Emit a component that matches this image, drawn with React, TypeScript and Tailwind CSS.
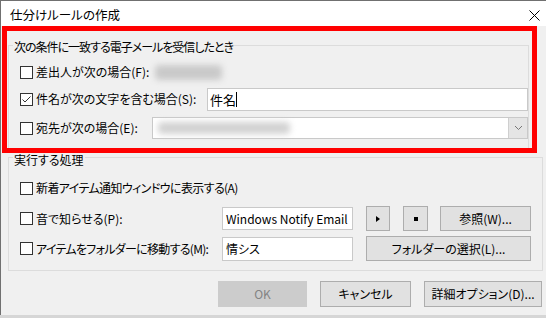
import React from "react";

function Check({ checked }: { checked?: boolean }) {
  return (
    <span className="w-[13px] h-[13px] border border-[#333333] bg-white flex items-center justify-center shrink-0">
      {checked && (
        <svg width="11" height="11" viewBox="0 0 11 11">
          <path d="M1.5 5.5 L4 8 L9.5 2.5" stroke="#333333" fill="none" strokeWidth="1" />
        </svg>
      )}
    </span>
  );
}

function Btn({ children, w, disabled }: { children: React.ReactNode; w: string; disabled?: boolean }) {
  return (
    <div
      className={
        "h-full flex items-center justify-center shrink-0 text-[12px] whitespace-nowrap " +
        w +
        (disabled
          ? " bg-[#cccccc] border border-[#cccccc] text-[#838383]"
          : " bg-[#e1e1e1] border border-[#adadad] text-black")
      }
    >
      {children}
    </div>
  );
}

export default function App() {
  return (
    <div className="w-[546px] h-[318px] overflow-hidden bg-white font-['Noto_Sans_CJK_JP','Noto_Sans',sans-serif] [font-feature-settings:'palt'] text-black">
      <div className="w-[546px] h-[315px] border-l border-t border-[#707070] bg-[#f0f0f0] flex flex-col">
        {/* Title bar */}
        <div className="h-[25px] bg-white flex items-center justify-between pl-[9px] pr-[6px] shrink-0">
          <span className="text-[12.5px] leading-[14px] mt-[3px]">仕分けルールの作成</span>
          <svg width="11" height="11" viewBox="0 0 11 11" className="mt-[3px]">
            <path d="M0.5 0.5 L10.5 10.5 M10.5 0.5 L0.5 10.5" stroke="#000" strokeWidth="1" />
          </svg>
        </div>

        {/* Red highlight */}
        <div className="ml-[1px] w-[535px] h-[127px] border-[5px] border-[#ff0000] shrink-0">
          <div className="ml-[1px] mt-[14px] w-[521px] h-[103px] border border-b-0 border-[#dcdcdc] flex flex-col">
            <span className="-mt-[6px] ml-[4px] px-[1px] w-fit bg-[#f0f0f0] text-[12px] leading-[14px] tracking-[-1px] whitespace-nowrap">
              次の条件に一致する電子メールを受信したとき
            </span>
            {/* Row 1 */}
            <div className="mt-[6px] h-[24px] pl-[11px] flex items-center">
              <Check />
              <span className="ml-[3px] w-[119px] text-[12px] leading-[14px] whitespace-nowrap">差出人が次の場合(F):</span>
              <div className="w-[67px] h-[15px] bg-[#c9c9c9] rounded-[4px] blur-[3px]" />
            </div>
            {/* Row 2 */}
            <div className="mt-[3px] h-[24px] pl-[11px] flex items-center">
              <Check checked />
              <span className="ml-[3px] w-[174px] text-[12px] leading-[14px] whitespace-nowrap">件名が次の文字を含む場合(S):</span>
              <div className="w-[321px] h-[23px] shrink-0 bg-white border border-[#c9c9c9] flex items-center pl-[2px]">
                <span className="text-[13px] leading-[15px]">件名</span>
                <span className="w-[1px] h-[15px] bg-black" />
              </div>
            </div>
            {/* Row 3 */}
            <div className="mt-[6px] h-[22px] pl-[11px] flex items-center">
              <Check />
              <span className="ml-[3px] w-[119px] text-[12px] leading-[14px] whitespace-nowrap">宛先が次の場合(E):</span>
              <div className="w-[376px] h-[22px] shrink-0 bg-white border border-[#c9c9c9] flex items-center justify-between">
                <div className="ml-[5px] w-[132px] h-[12px] bg-[#d2d2d2] rounded-[4px] blur-[3px]" />
                <div className="w-[19px] h-[20px] bg-[#e5e5e5] border-l border-[#cfcfcf] flex items-center justify-center">
                  <svg width="9" height="6" viewBox="0 0 9 6">
                    <path d="M1 1 L4.5 4.5 L8 1" stroke="#777" fill="none" strokeWidth="1" />
                  </svg>
                </div>
              </div>
            </div>
          </div>
        </div>

        {/* Group 2 */}
        <div className="mt-[4px] ml-[7px] w-[535px] h-[114px] border border-[#dcdcdc] flex flex-col shrink-0">
          <span className="-mt-[5px] ml-[4px] px-[1px] w-fit bg-[#f0f0f0] text-[12px] leading-[14px] whitespace-nowrap">実行する処理</span>
          <div className="mt-[10px] h-[22px] pl-[11px] flex items-center">
            <Check />
            <span className="ml-[3px] text-[12px] leading-[14px] tracking-[-0.6px] whitespace-nowrap">新着アイテム通知ウィンドウに表示する(A)</span>
          </div>
          <div className="mt-[7px] h-[25px] pl-[11px] flex items-center">
            <Check />
            <span className="ml-[3px] w-[186px] text-[12px] leading-[14px] whitespace-nowrap">音で知らせる(P):</span>
            <div className="w-[131px] h-[23px] shrink-0 bg-white border border-[#c9c9c9] flex items-center pl-[3px] text-[12px] leading-[14px] whitespace-nowrap overflow-hidden">
              Windows Notify Email
            </div>
            <div className="ml-[13px] h-full flex">
              <Btn w="w-[24px]">
                <svg width="4" height="6" viewBox="0 0 4 6">
                  <path d="M0 0 L4 3 L0 6 Z" fill="#000" />
                </svg>
              </Btn>
            </div>
            <div className="ml-[13px] h-full flex">
              <Btn w="w-[25px]">
                <span className="w-[4px] h-[4px] bg-black" />
              </Btn>
            </div>
            <div className="ml-[12px] h-full flex">
              <Btn w="w-[91px]">参照(W)...</Btn>
            </div>
          </div>
          <div className="mt-[5px] h-[25px] pl-[11px] flex items-center">
            <Check />
            <span className="ml-[3px] w-[186px] text-[12px] leading-[14px] tracking-[-0.7px] whitespace-nowrap">アイテムをフォルダーに移動する(M):</span>
            <div className="w-[131px] h-[24px] shrink-0 bg-white border border-[#c9c9c9] flex items-center pl-[3px] text-[12px] leading-[14px]">
              情シス
            </div>
            <div className="ml-[13px] h-full flex">
              <Btn w="w-[165px]">フォルダーの選択(L)...</Btn>
            </div>
          </div>
        </div>

        {/* Bottom buttons */}
        <div className="mt-[10px] h-[26px] flex justify-end gap-[13px] pr-[4px] shrink-0">
          <Btn w="w-[89px]" disabled>
            OK
          </Btn>
          <Btn w="w-[91px]">キャンセル</Btn>
          <Btn w="w-[118px]">詳細オプション(D)...</Btn>
        </div>
      </div>
      <div className="h-[3px] bg-[#d6d6d6]" />
    </div>
  );
}
